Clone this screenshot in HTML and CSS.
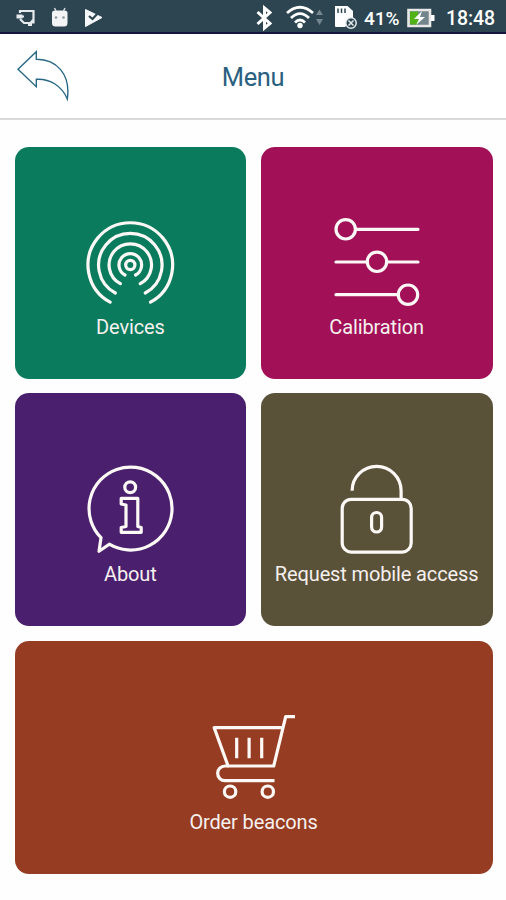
FILE: index.html
```html
<!DOCTYPE html>
<html lang="en">
<head>
    <meta charset="utf-8">
    <title>Menu</title>
    <meta name="viewport" content="width=device-width, initial-scale=1">
    <link rel="stylesheet" href="styles.css">
</head>
<body>
    <div class="status-bar">
        <svg class="notifications" width="110" height="32" viewBox="0 0 110 32">
            <!-- cast -->
            <path d="M20 13V11H33.500V22.500H31M17 16.500H24M20 19L24 23H28M29 25L33 20" fill="none" stroke="#e6eaed" stroke-width="2.2"/>
            <path d="M16.500 14.500h6v4h-6zM28 22h4v4h-4z" fill="#e6eaed"/>
            <!-- android -->
            <path d="M52 13Q52 10.500 55 10.500H64.500Q67.500 10.500 67.500 13V23Q67.500 26.500 64 26.500H55.500Q52 26.500 52 23Z" fill="#f2f4f5"/>
            <path d="M56 11L54.500 8M63.500 11L65 8" stroke="#d5dbdf" stroke-width="1.500"/>
            <circle cx="56" cy="17.500" r="1.300" fill="#8b979e"/>
            <circle cx="63.500" cy="17.500" r="1.300" fill="#8b979e"/>
            <!-- play -->
            <path d="M85.500 9.500L102 17.500L85.500 26.500Z" fill="#f7f8f9" stroke="#f7f8f9" stroke-linejoin="round"/>
            <path d="M89 16L92.500 19L99 12" fill="none" stroke="#2c4551" stroke-width="2.200"/>
        </svg>
        <div class="status-right">
            <svg width="106" height="32" viewBox="254 0 106 32">
                <path d="M257.500 12L270 23.500L264.500 28V8L270 12.500L257.500 24" fill="none" stroke="#fff" stroke-width="3"/>
                <g fill="none" stroke="#fff" stroke-width="2.700">
                    <path d="M287 13Q300 1.500 313 13"/>
                    <path d="M291 18Q300 9 309 18"/>
                    <path d="M295 22.500Q300 17.500 305 22.500"/>
                </g>
                <circle cx="300" cy="25.500" r="2.700" fill="#fff"/>
                <path d="M316 15L319.500 9.500L323 15ZM316 19H323L319.500 25Z" fill="#76868f"/>
                <path d="M335 6H347.500L353 11V18L345 27H336Q335 27 335 26Z" fill="#fff"/>
                <path d="M338 8.500V13M341.500 8.500V13M345 8.500V13" stroke="#2c4551" stroke-width="1.500"/>
                <circle cx="351" cy="23" r="5.200" fill="#2c4551" stroke="#e5e9eb" stroke-width="1.500"/>
                <path d="M348.500 20.500L353.500 25.500M353.500 20.500L348.500 25.500" stroke="#e5e9eb" stroke-width="1.500"/>
            </svg>
            <span class="percent">41%</span>
            <svg class="battery" width="28" height="32" viewBox="407 0 28 32">
                <path d="M408.500 10H430V26H408.500Z" fill="#73858c" stroke="#e8e8e8" stroke-width="2.600"/>
                <path d="M410 11.500H418V24.500H410Z" fill="#54b219"/>
                <path d="M431 15h3.500v6h-3.500z" fill="#fff"/>
                <path d="M422 11L414 19H419L416 25L425 17H420Z" fill="#fff"/>
            </svg>
            <span class="clock">18:48</span>
        </div>
    </div>
    <header class="header">
        <a class="back">
            <svg width="54" height="54" viewBox="16 50 54 54">
                <path d="M18 70.300L36.300 52.700V60.300C56 60 71 75 67.300 100C62 87 50 79.500 36.300 80.300V87.700Z"/>
            </svg>
        </a>
        <h1 class="title">Menu</h1>
    </header>
    <main class="tiles">
        <a class="tile devices">
            <svg class="icon" viewBox="0 0 100 100">
                <circle cx="50.300" cy="53" r="4.600"/>
                <path d="M45 63A11.300 11.300 0 1 1 55.600 63"/>
                <path d="M40.300 71.700A21.200 21.200 0 1 1 60.300 71.700"/>
                <path d="M35.300 81A31.700 31.700 0 1 1 65.300 81"/>
                <path d="M30.100 90.200A42.300 42.300 0 1 1 70.500 90.200"/>
            </svg>
            <span class="label">Devices</span>
        </a>
        <a class="tile calibration">
            <svg class="icon" viewBox="0 0 100 100">
                <circle cx="18.700" cy="17.300" r="9.700"/>
                <circle cx="50" cy="49.800" r="9.700"/>
                <circle cx="81" cy="82.700" r="9.700"/>
                <path d="M28.600 17.300H91M9 50H40.300M59.700 50H91M9 82.700H71.300"/>
            </svg>
            <span class="label">Calibration</span>
        </a>
        <a class="tile about">
            <svg class="icon" viewBox="0 0 100 100">
                <path d="M21 79.700A41.500 41.500 0 1 1 29.300 86.200L19 93.300Z"/>
                <circle cx="50.200" cy="29.300" r="5.400"/>
                <path d="M41.200 40.300H57.800V68.500L61.200 69.500V74.300H41.200V69.500L46 68.500V47L41.200 46Z"/>
            </svg>
            <span class="label">About</span>
        </a>
        <a class="tile request">
            <svg class="icon" viewBox="0 0 100 100">
                <rect x="15.200" y="41.300" width="69" height="52.800" rx="9"/>
                <path d="M25.100 32.700A24.500 24.500 0 0 1 74.100 33V41"/>
                <rect x="44.600" y="54.500" width="10" height="19.500" rx="5"/>
            </svg>
            <span class="label">Request mobile access</span>
        </a>
        <a class="tile order">
            <svg class="icon" viewBox="0 0 100 100">
                <path d="M91 10.700H81.700L69.700 60H24.100L10.200 21.700H78.500"/>
                <path d="M24.500 60H21A7.300 7.300 0 0 0 21 74.700H70.500"/>
                <path d="M32.700 31.700V52.300M45.100 31.700V52.300M57.700 31.700V52.300"/>
                <circle cx="26.100" cy="85.700" r="5.700"/>
                <circle cx="63.800" cy="85.700" r="5.700"/>
            </svg>
            <span class="label">Order beacons</span>
        </a>
    </main>
</body>
</html>
```

FILE: styles.css
```css
* {
    box-sizing: border-box;
}
body {
    margin: 0;
    height: 900px;
    background-color: #fefefe;
    font-family: Roboto, sans-serif;
    overflow: hidden;
}
.status-bar {
    display: flex;
    justify-content: space-between;
    height: 34px;
    padding-right: 11px;
    background-color: #2c4551;
    border-bottom: 2px solid #15163f;
    color: #fff;
}
.status-right {
    display: flex;
    font-size: 19.500px;
    line-height: 38px;
    font-weight: 500;
}
.percent {
    width: 47px;
    padding-left: 4px;
    font-size: 19px;
}
.clock {
    width: 49px;
    margin-left: 11px;
    letter-spacing: -0.1px;
    white-space: nowrap;
}
.header {
    display: grid;
    grid-template-columns: 70px 1fr 70px;
    align-items: center;
    height: 86px;
    background-color: #fff;
    border-bottom: 2px solid #d9d9d9;
}
.back {
    display: flex;
    padding-left: 16px;
}
.back path {
    fill: none;
    stroke: #286887;
    stroke-width: 1.4;
}
.title {
    margin: 0;
    padding-top: 2px;
    text-align: center;
    font-size: 25.500px;
    font-weight: 400;
    letter-spacing: -0.4px;
    color: #2a6080;
}
.tiles {
    display: grid;
    grid-template-columns: 1fr 1fr;
    grid-template-rows: 232px 233px 233px;
    gap: 14.500px;
    padding: 26.500px 13.500px 0 14.500px;
}
.tile {
    display: flex;
    flex-direction: column;
    align-items: center;
    padding-top: 65px;
    border-radius: 14px;
    color: #f6f0ee;
}
.icon {
    width: 100px;
    height: 100px;
    fill: none;
    stroke: #fcf8f6;
    stroke-width: 3.2;
    stroke-linejoin: round;
}
.devices .icon, .calibration .icon {
    stroke-linecap: round;
}
.label {
    margin-top: 4px;
    font-size: 20px;
    line-height: 24px;
    letter-spacing: -0.13px;
    white-space: nowrap;
}
.devices .label, .calibration .label {
    margin-top: 3px;
}
.devices {
    background-color: #0a7b5d;
}
.calibration {
    background-color: #a21058;
}
.about {
    background-color: #491f6e;
}
.request {
    background-color: #5a5139;
}
.order {
    grid-column: span 2;
    background-color: #963c22;
}
```
